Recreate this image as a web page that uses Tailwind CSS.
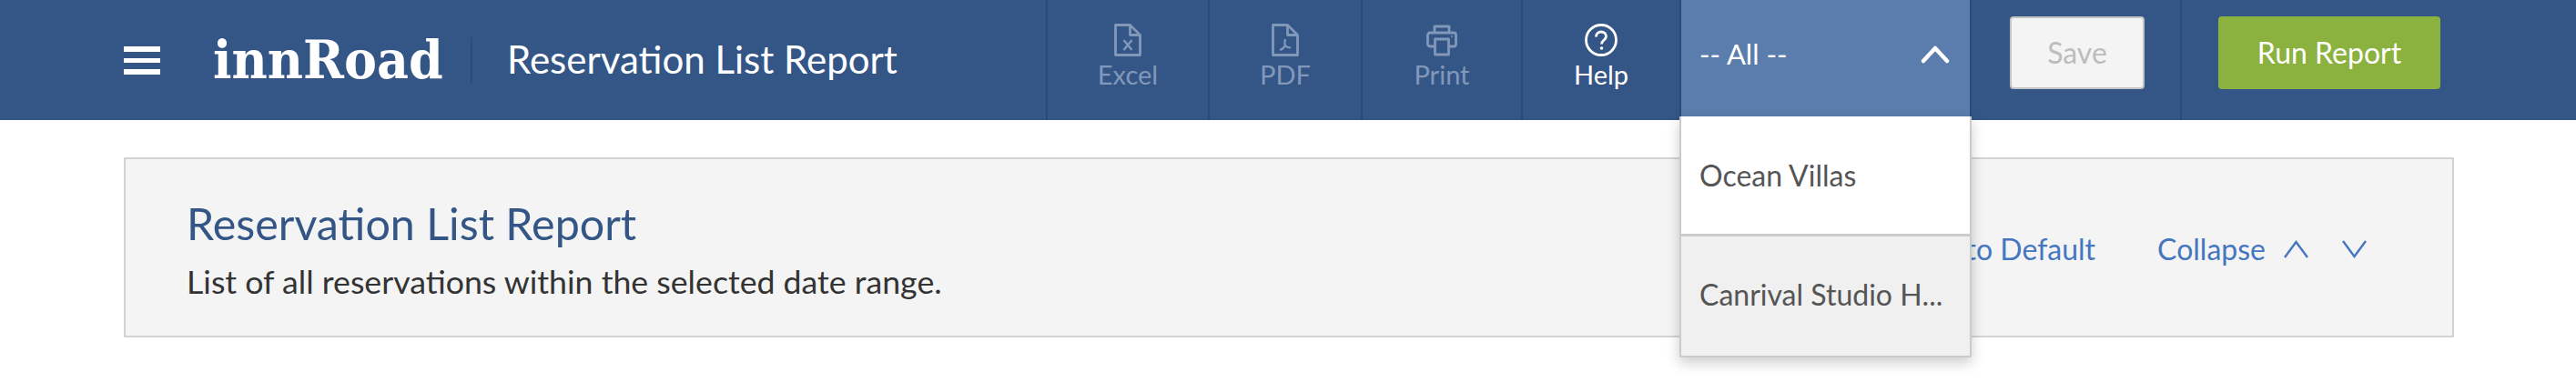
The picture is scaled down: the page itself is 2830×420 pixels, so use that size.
<!DOCTYPE html>
<html lang="en">
<head>
  <meta charset="UTF-8">
  <title>Reservation List Report</title>
  <script src="https://cdn.jsdelivr.net/npm/@tailwindcss/browser@4"></script>
</head>
<body class="min-h-[420px] bg-white font-['Lato','Open_Sans',sans-serif]">
  <header class="flex items-stretch h-[132px] bg-[#345686] text-white">
    <div class="flex items-center w-[1149px] shrink-0 pl-[136px]">
      <svg class="w-[40px] h-[31px]" viewBox="0 0 40 31" fill="#fff"><rect width="40" height="6"/><rect y="13" width="40" height="5"/><rect y="25" width="40" height="6"/></svg>
      <span class="ml-[58px] w-[283px] font-['DejaVu_Serif',serif] font-bold text-[54px] leading-none scale-y-[1.07] origin-center">innRoad</span>
      <div class="h-[50px] w-[2px] bg-[#2b4a75]"></div>
      <h1 class="ml-[38px] mb-[2px] text-[42px] leading-none whitespace-nowrap">Reservation List Report</h1>
    </div>

    <a class="w-[178px] shrink-0 border-l-2 border-[#2b4a75] flex flex-col items-center pt-[26px] text-[#8298ba]">
      <svg class="w-[30px] h-[36px]" viewBox="0 0 30 36" fill="none" stroke="currentColor" stroke-width="2.8" stroke-linejoin="round">
        <path d="M1.500 1.500h16l11 11v22h-27z"/><path d="M17.500 1.500v11h11"/>
        <path d="M10.500 18l9 11M19.500 18l-9 11" stroke-width="2.400"/>
      </svg>
      <span class="mt-[3px] text-[29px] leading-[34px]">Excel</span>
    </a>
    <a class="w-[168px] shrink-0 border-l-2 border-[#2b4a75] flex flex-col items-center pt-[26px] text-[#8298ba]">
      <svg class="w-[30px] h-[36px]" viewBox="0 0 30 36" fill="none" stroke="currentColor" stroke-width="2.8" stroke-linejoin="round">
        <path d="M1.500 1.500h16l11 11v22h-27z"/><path d="M17.500 1.500v11h11"/>
        <path d="M15 17c-1 4-.5 6 0 7 1 1.500 4 2.500 6 2.500M15 24c-1 2-3 4-6 5" stroke-width="2.200"/>
      </svg>
      <span class="mt-[3px] text-[29px] leading-[34px]">PDF</span>
    </a>
    <a class="w-[176px] shrink-0 border-l-2 border-[#2b4a75] flex flex-col items-center pt-[26px] text-[#8298ba]">
      <svg class="w-[34px] h-[36px]" viewBox="0 0 34 36" fill="none" stroke="currentColor" stroke-width="2.800" stroke-linejoin="round">
        <path d="M9 10V3h16v7"/>
        <path d="M9 25H4a2.500 2.500 0 0 1-2.500-2.500V12.500A2.500 2.500 0 0 1 4 10h26a2.500 2.500 0 0 1 2.500 2.500v10A2.500 2.500 0 0 1 30 25h-5"/>
        <rect x="9.500" y="17" width="15" height="17"/>
        <circle cx="28" cy="14" r="1" fill="currentColor" stroke="none"/>
      </svg>
      <span class="mt-[3px] text-[29px] leading-[34px]">Print</span>
    </a>
    <a class="w-[174px] shrink-0 border-l-2 border-[#2b4a75] flex flex-col items-center pt-[26px] text-white">
      <svg class="w-[36px] h-[36px]" viewBox="0 0 36 36" fill="none" stroke="currentColor" stroke-width="2.800">
        <circle cx="18" cy="18" r="16.500"/>
        <path d="M12.500 14.500c0-3.500 2.500-5.500 5.500-5.500s5.500 2 5.500 5c0 4-5 4-5 8.500"/>
        <circle cx="18.500" cy="27" r="1.800" fill="currentColor" stroke="none"/>
      </svg>
      <span class="mt-[3px] text-[29px] leading-[34px]">Help</span>
    </a>

    <div class="relative w-[321px] shrink-0">
      <div class="h-[128px] bg-[#5b7dad] border-x-2 border-[#2b4a75] flex items-center justify-between pl-[20px] pr-[22px] pb-[9px]">
        <span class="text-[31px]">-- All --</span>
        <svg class="w-[32px] h-[20px]" viewBox="0 0 32 20" fill="none" stroke="#fff" stroke-width="4.500" stroke-linecap="round" stroke-linejoin="round"><path d="M3 17L16 3l13 14"/></svg>
      </div>
      <ul class="absolute z-10 left-0 top-[128px] w-full bg-white border-x-2 border-b-2 border-[#cbcbcb] shadow-[0_6px_14px_rgba(0,0,0,0.2)] text-[32px] text-[#555]">
        <li class="h-[132px] px-[20px] pt-[47px] leading-[36px] border-b-[3px] border-[#cbcbcb]">Ocean Villas</li>
        <li class="h-[131px] px-[20px] pt-[46px] leading-[36px] bg-[#f0f0f0] whitespace-nowrap">Canrival Studio H...</li>
      </ul>
    </div>

    <div class="w-[231px] shrink-0 border-r-2 border-[#2b4a75] pl-[42px] pt-[18px]">
      <button class="w-[148px] h-[80px] bg-[#f4f4f4] border-2 border-[#c4c4c4] rounded-[4px] text-[32px] text-[#bdbdbd]">Save</button>
    </div>
    <div class="pl-[40px] pt-[18px]">
      <button class="w-[244px] h-[80px] bg-[#8bb13e] rounded-[4px] text-[32px] text-white">Run Report</button>
    </div>
  </header>

  <section class="mt-[41px] ml-[136px] mr-[134px] h-[198px] bg-[#f4f4f4] border-2 border-[#d3d3d3] flex items-center justify-between pl-[67px] pr-[94px]">
    <div class="pt-[4px]">
      <h2 class="text-[48.4px] leading-[54px] text-[#345686]">Reservation List Report</h2>
      <p class="mt-[18px] text-[35.7px] leading-[40px] text-[#333]">List of all reservations within the selected date range.</p>
    </div>
    <div class="flex items-center pt-[4px] text-[32px] text-[#4576c0]">
      <a class="mr-[68px]">Reset to Default</a>
      <a>Collapse</a>
      <svg class="ml-[20px] w-[27px] h-[20px]" viewBox="0 0 27 20" fill="none" stroke="currentColor" stroke-width="2.400"><path d="M1 19L13.500 2 26 19"/></svg>
      <svg class="ml-[37px] w-[27px] h-[20px]" viewBox="0 0 27 20" fill="none" stroke="currentColor" stroke-width="2.400"><path d="M1 1l12.500 17L26 1"/></svg>
    </div>
  </section>
</body>
</html>
